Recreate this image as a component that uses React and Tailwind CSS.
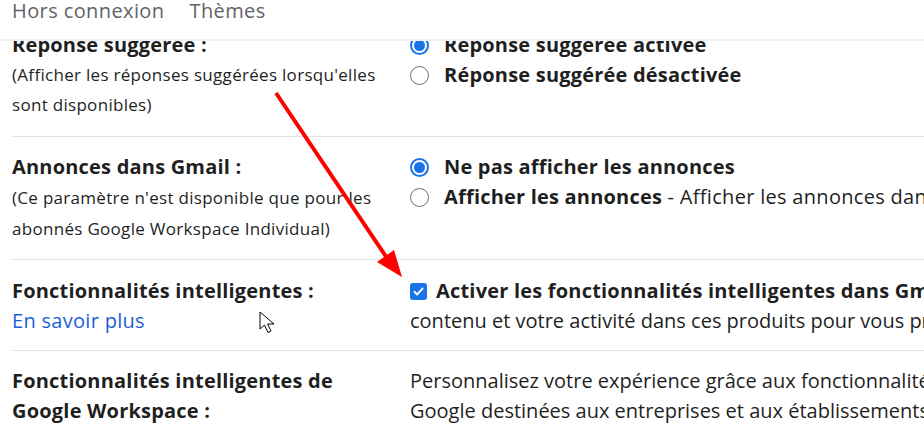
import React from "react";

function Radio({ checked }) {
  return checked ? (
    <span className="inline-flex w-[19px] h-[19px] shrink-0 items-center justify-center rounded-full border-2 border-[#1a73e8]">
      <span className="w-[11px] h-[11px] rounded-full bg-[#1a73e8]" />
    </span>
  ) : (
    <span className="inline-block w-[19px] h-[19px] shrink-0 rounded-full border-[1.5px] border-[#6f6f6f]" />
  );
}

function Checkbox() {
  return (
    <span className="inline-flex w-[17px] h-[17px] shrink-0 items-center justify-center rounded-[3px] bg-[#1a73e8]">
      <svg width="13" height="13" viewBox="0 0 24 24" fill="none">
        <path d="M4.5 12.5l5 5L19.5 6.5" stroke="white" strokeWidth="3.4" strokeLinecap="round" strokeLinejoin="round" />
      </svg>
    </span>
  );
}

function Row({ left, right, className = "" }) {
  return (
    <div className={`flex border-b border-[#e3e3e3] ${className}`}>
      <div className="w-[398px] shrink-0">{left}</div>
      <div className="flex-1 min-w-0">{right}</div>
    </div>
  );
}

export default function App() {
  const bold = "text-[20px] font-bold text-[#1f1f1f] leading-[30px] whitespace-nowrap tracking-[0.2px]";
  const small = "text-[17px] text-[#1f1f1f] leading-[30px] whitespace-nowrap tracking-[0.3px]";
  const small31 = "text-[17px] text-[#1f1f1f] leading-[31px] whitespace-nowrap tracking-[0.3px]";
  const body = "text-[20px] text-[#1f1f1f] leading-[30px] whitespace-nowrap";

  return (
    <div
      className="relative w-[924px] h-[432px] overflow-hidden bg-white"
      style={{ fontFamily: "'Open Sans', 'Liberation Sans', sans-serif" }}
    >
      {/* tabs */}
      <div className="flex h-[41px] items-start gap-[25px] pl-[12px] border-b-2 border-[#eef1f5] text-[20px] leading-[22px] tracking-[0.4px] text-[#5f6368]">
        <span>Hors connexion</span>
        <span>Thèmes</span>
      </div>

      <div className="h-[391px] overflow-hidden">
        <div className="ml-[12px] mt-[-26px]">
          <Row
            className="pt-[15px] pb-[16px]"
            left={
              <>
                <div className={bold}>Réponse suggérée :</div>
                <div className={small}>(Afficher les réponses suggérées lorsqu'elles</div>
                <div className={small}>sont disponibles)</div>
              </>
            }
            right={
              <>
                <div className="flex items-center gap-[15px] h-[30px]">
                  <Radio checked />
                  <span className={bold}>Réponse suggérée activée</span>
                </div>
                <div className="flex items-center gap-[15px] h-[30px]">
                  <Radio />
                  <span className={bold}>Réponse suggérée désactivée</span>
                </div>
              </>
            }
          />

          <Row
            className="pt-[15px] pb-[15px]"
            left={
              <>
                <div className={bold}>Annonces dans Gmail :</div>
                <div className={small31}>(Ce paramètre n'est disponible que pour les</div>
                <div className={small31}>abonnés Google Workspace Individual)</div>
              </>
            }
            right={
              <>
                <div className="flex items-center gap-[15px] h-[30px]">
                  <Radio checked />
                  <span className={bold}>Ne pas afficher les annonces</span>
                </div>
                <div className="flex items-center gap-[15px] h-[30px]">
                  <Radio />
                  <span className={`${body} tracking-[0.3px]`}>
                    <b className="font-bold tracking-[0.2px]">Afficher les annonces</b> - Afficher les annonces dans Gmail en fonction de vos données
                  </span>
                </div>
              </>
            }
          />

          <Row
            className="pt-[16px] pb-[14px]"
            left={
              <>
                <div className={bold}>Fonctionnalités intelligentes :</div>
                <div className="text-[20px] text-[#1a5fd6] leading-[30px] tracking-[0.3px]">En savoir plus</div>
              </>
            }
            right={
              <>
                <div className="flex items-center gap-[9px] h-[30px]">
                  <Checkbox />
                  <span className={body}>
                    <b className="font-bold tracking-[0.2px]">Activer les fonctionnalités intelligentes dans Gmail, Chat et Meet</b> - Autoriser Gmail, Chat et Meet à utiliser votre
                  </span>
                </div>
                <div className={body}>contenu et votre activité dans ces produits pour vous proposer des fonctionnalités intelligentes</div>
              </>
            }
          />

          <Row
            className="pt-[15px] pb-[15px]"
            left={
              <>
                <div className={bold}>Fonctionnalités intelligentes de</div>
                <div className={bold}>Google Workspace :</div>
              </>
            }
            right={
              <>
                <div className={body}>Personnalisez votre expérience grâce aux fonctionnalités intelligentes de</div>
                <div className={body}>Google destinées aux entreprises et aux établissements d'enseignement</div>
              </>
            }
          />
        </div>
      </div>

      {/* annotation arrow */}
      <svg className="absolute left-0 top-0 pointer-events-none" width="924" height="432">
        <line x1="276" y1="93" x2="391" y2="264" stroke="#ff0000" strokeWidth="4" />
        <polygon points="377,262 394,250 402,277" fill="#ff0000" />
      </svg>

      {/* mouse cursor */}
      <svg className="absolute left-[259px] top-[311px] pointer-events-none" width="20" height="28" viewBox="0 0 20 28">
        <path d="M1 1 L1 18 L5.5 14 L9 21.5 L12 20 L8.6 13 L15 13 Z" fill="white" stroke="black" strokeWidth="1" strokeLinejoin="round" />
      </svg>
    </div>
  );
}
